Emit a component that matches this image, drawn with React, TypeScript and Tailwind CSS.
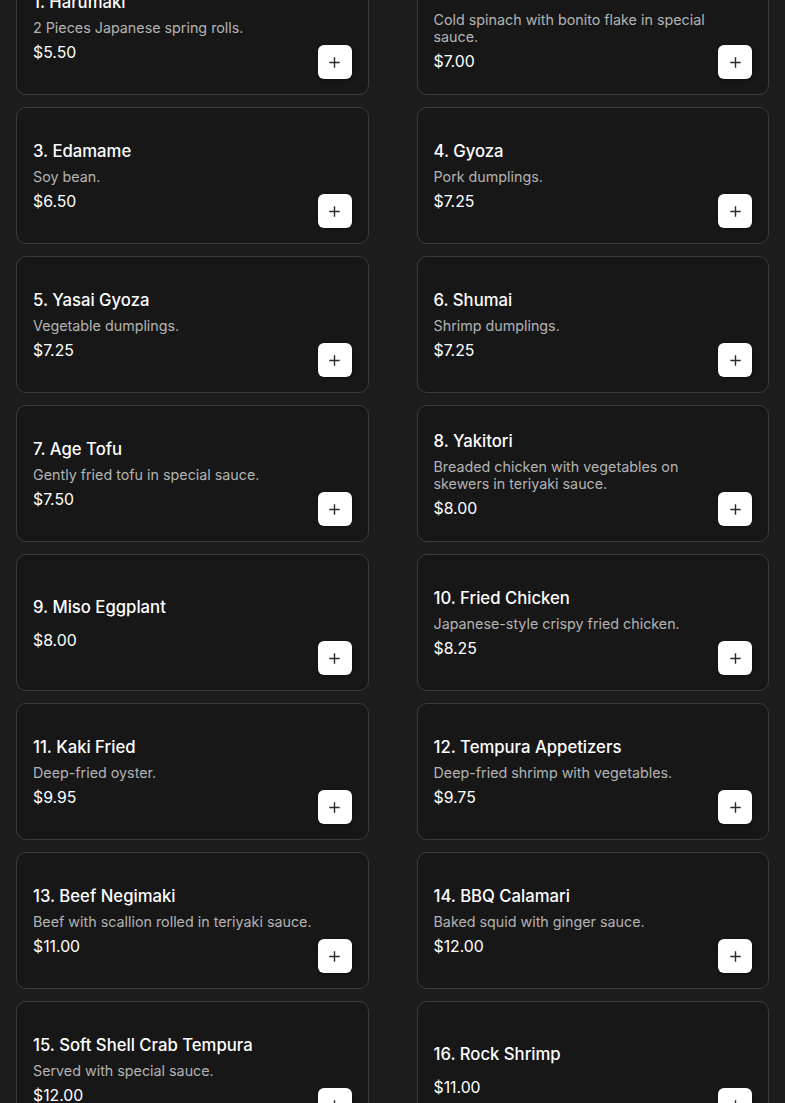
import React from "react";

type Item = { name: string; desc: string; price: string };

const items: Item[] = [
  { name: "1. Harumaki", desc: "2 Pieces Japanese spring rolls.", price: "$5.50" },
  { name: "2. Ohitashi", desc: "Cold spinach with bonito flake in special sauce.", price: "$7.00" },
  { name: "3. Edamame", desc: "Soy bean.", price: "$6.50" },
  { name: "4. Gyoza", desc: "Pork dumplings.", price: "$7.25" },
  { name: "5. Yasai Gyoza", desc: "Vegetable dumplings.", price: "$7.25" },
  { name: "6. Shumai", desc: "Shrimp dumplings.", price: "$7.25" },
  { name: "7. Age Tofu", desc: "Gently fried tofu in special sauce.", price: "$7.50" },
  { name: "8. Yakitori", desc: "Breaded chicken with vegetables on skewers in teriyaki sauce.", price: "$8.00" },
  { name: "9. Miso Eggplant", desc: "", price: "$8.00" },
  { name: "10. Fried Chicken", desc: "Japanese-style crispy fried chicken.", price: "$8.25" },
  { name: "11. Kaki Fried", desc: "Deep-fried oyster.", price: "$9.95" },
  { name: "12. Tempura Appetizers", desc: "Deep-fried shrimp with vegetables.", price: "$9.75" },
  { name: "13. Beef Negimaki", desc: "Beef with scallion rolled in teriyaki sauce.", price: "$11.00" },
  { name: "14. BBQ Calamari", desc: "Baked squid with ginger sauce.", price: "$12.00" },
  { name: "15. Soft Shell Crab Tempura", desc: "Served with special sauce.", price: "$12.00" },
  { name: "16. Rock Shrimp", desc: "", price: "$11.00" },
];

function Plus() {
  return (
    <svg width="11" height="11" viewBox="0 0 11 11" fill="none">
      <path d="M5.5 1v9M1 5.5h9" stroke="#2a2a2a" strokeWidth="1.4" strokeLinecap="square" />
    </svg>
  );
}

function Card({ item }: { item: Item }) {
  return (
    <div className="relative flex h-[137px] items-center rounded-[10px] border border-[#3b3b3b] bg-[#171717] px-4 pt-[2px]">
      <div className="flex min-w-0 flex-1 flex-col gap-[5px] pr-[34px]">
        <h3 className="text-[16.7px] font-medium leading-[24px] text-white">{item.name}</h3>
        <p className="text-[14.3px] leading-[17px] text-[#b3b3b3]">{item.desc}</p>
        <p className="text-[15.8px] leading-[24px] text-white">{item.price}</p>
      </div>
      <button className="absolute bottom-[15px] right-[16px] flex h-[34px] w-[34px] items-center justify-center rounded-[6px] bg-white shadow-[0_1px_3px_rgba(0,0,0,0.4)]">
        <Plus />
      </button>
    </div>
  );
}

export default function App() {
  return (
    <div
      className="min-h-screen bg-[#1c1c1c] px-4"
      style={{ fontFamily: "Inter, 'Noto Sans', sans-serif" }}
    >
      <div className="-mt-[42px] grid grid-cols-2 gap-x-12 gap-y-3 pb-4">
        {items.map((it) => (
          <Card key={it.name} item={it} />
        ))}
      </div>
    </div>
  );
}
